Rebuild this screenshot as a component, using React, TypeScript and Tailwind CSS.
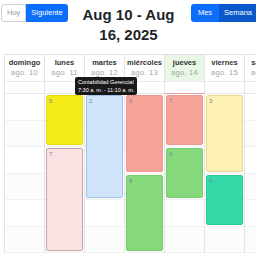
import React from "react";

type Ev = {
  start: number;
  span: number;
  bg: string;
  label: string;
};

// columnas de la semana, cada una con sus eventos
const days = [
  { name: "domingo", date: "ago. 10", events: [] as Ev[] },
  {
    name: "lunes",
    date: "ago. 11",
    events: [
      { start: 1, span: 2, bg: "bg-[#f4eb18] border-[#e6dc10]", label: "5" },
      { start: 3, span: 4, bg: "bg-[#fae2e2] border-[#c9a2a6]", label: "7" },
    ],
  },
  {
    name: "martes",
    date: "ago. 12",
    events: [{ start: 1, span: 4, bg: "bg-[#cfe4fb] border-[#9fc2e6]", label: "2" }],
  },
  {
    name: "miércoles",
    date: "ago. 13",
    events: [
      { start: 1, span: 3, bg: "bg-[#f5a397] border-[#eb978b]", label: "6" },
      { start: 4, span: 3, bg: "bg-[#86d97a] border-[#78cc6c]", label: "8" },
    ],
  },
  {
    name: "jueves",
    date: "ago. 14",
    today: true,
    events: [
      { start: 1, span: 2, bg: "bg-[#f5a397] border-[#eb978b]", label: "7" },
      { start: 3, span: 2, bg: "bg-[#86d97a] border-[#78cc6c]", label: "9" },
    ],
  },
  {
    name: "viernes",
    date: "ago. 15",
    events: [
      { start: 1, span: 3, bg: "bg-[#fdf0b4] border-[#e9d98e]", label: "3" },
      { start: 4, span: 2, bg: "bg-[#33d9a6] border-[#2cc896]", label: "4" },
    ],
  },
  { name: "sábado", date: "ago. 16", events: [] as Ev[] },
];

const rowStart = ["", "row-start-1", "row-start-2", "row-start-3", "row-start-4", "row-start-5", "row-start-6"];
const rowSpan = ["", "row-span-1", "row-span-2", "row-span-3", "row-span-4", "row-span-5", "row-span-6"];

export default function App() {
  return (
    <div className="relative w-[256px] h-[256px] overflow-hidden bg-white font-[family-name:'Liberation_Sans',Arial,sans-serif]">
      {/* Toolbar */}
      <div className="grid grid-cols-[1fr_auto_1fr] items-start h-[54px] pt-[4px] pl-[1px]">
        <div className="flex h-[18px] justify-self-start">
          <button className="h-full px-[5px] text-[7.5px] text-[#9a9a9a] bg-white border border-[#cfcfcf] rounded-l-[3px]">
            Hoy
          </button>
          <button className="h-full px-[5px] text-[7.5px] text-white bg-[#0d6efd] rounded-r-[3px]">
            Siguiente
          </button>
        </div>
        <h1 className="text-center whitespace-nowrap text-[15px] leading-[20px] font-bold text-[#212529] pt-[1px]">
          Aug 10 - Aug
          <br />
          16, 2025
        </h1>
        <div className="flex h-[18px] justify-self-end">
          <button className="h-full px-[7px] text-[7.5px] text-white bg-[#0d6efd] rounded-l-[3px]">
            Mes
          </button>
          <button className="h-full pl-[5px] pr-[4px] text-[7.5px] text-white bg-[#0a58ca]">
            Semana
          </button>
        </div>
      </div>

      {/* Semana */}
      <div className="flex ml-[4px] border-t border-[#e2e2e2]">
        {days.map((d) => (
          <div key={d.name} className="w-[40px] shrink-0 border-l border-[#e4e4e4]">
            <div
              className={`h-[26px] pt-[3px] text-center whitespace-nowrap ${d.today ? "bg-[#e8f7e6]" : ""}`}
            >
              <div className="text-[7.5px] leading-[10px] font-bold text-[#333]">{d.name}</div>
              <div className="text-[7.5px] leading-[10px] text-[#a5a5a5] tracking-[0.3px]">{d.date}</div>
            </div>
            <div
              className={`h-[13px] border-t ${
                d.today ? "border-[#e9e9e9] border-b-[1.5px] border-b-[#e29a9a]" : "border-[#e9e9e9] border-b border-b-[#e9e9e9]"
              }`}
            />
            <div className="grid grid-rows-[repeat(6,26.5px)]">
              {[1, 2, 3, 4, 5, 6].map((r) => (
                <div
                  key={r}
                  className={`col-start-1 ${rowStart[r]} border-b border-[#f0f0f0] ${r % 2 ? "" : "bg-[#fcfcfc]"}`}
                />
              ))}
              {d.events.map((e) => (
                <div
                  key={e.label + e.start}
                  className={`col-start-1 ${rowStart[e.start]} ${rowSpan[e.span]} mt-[1px] mb-[2px] mx-[1px] border rounded-[2px] ${e.bg} px-[2px] pt-[1px] text-[6px] leading-[8px] text-[#7286a8]`}
                >
                  {e.label}
                </div>
              ))}
            </div>
          </div>
        ))}
      </div>

      {/* Tooltip */}
      <div className="absolute left-[75px] top-[77px] w-[62px] h-[18px] bg-black/90 rounded-[2px] px-[3px] pt-[2px] text-white text-[5.5px] leading-[7.5px] whitespace-nowrap overflow-hidden">
        <div>Contabilidad Gerencial</div>
        <div>7:30 a. m. - 11:10 a. m.</div>
      </div>
    </div>
  );
}
